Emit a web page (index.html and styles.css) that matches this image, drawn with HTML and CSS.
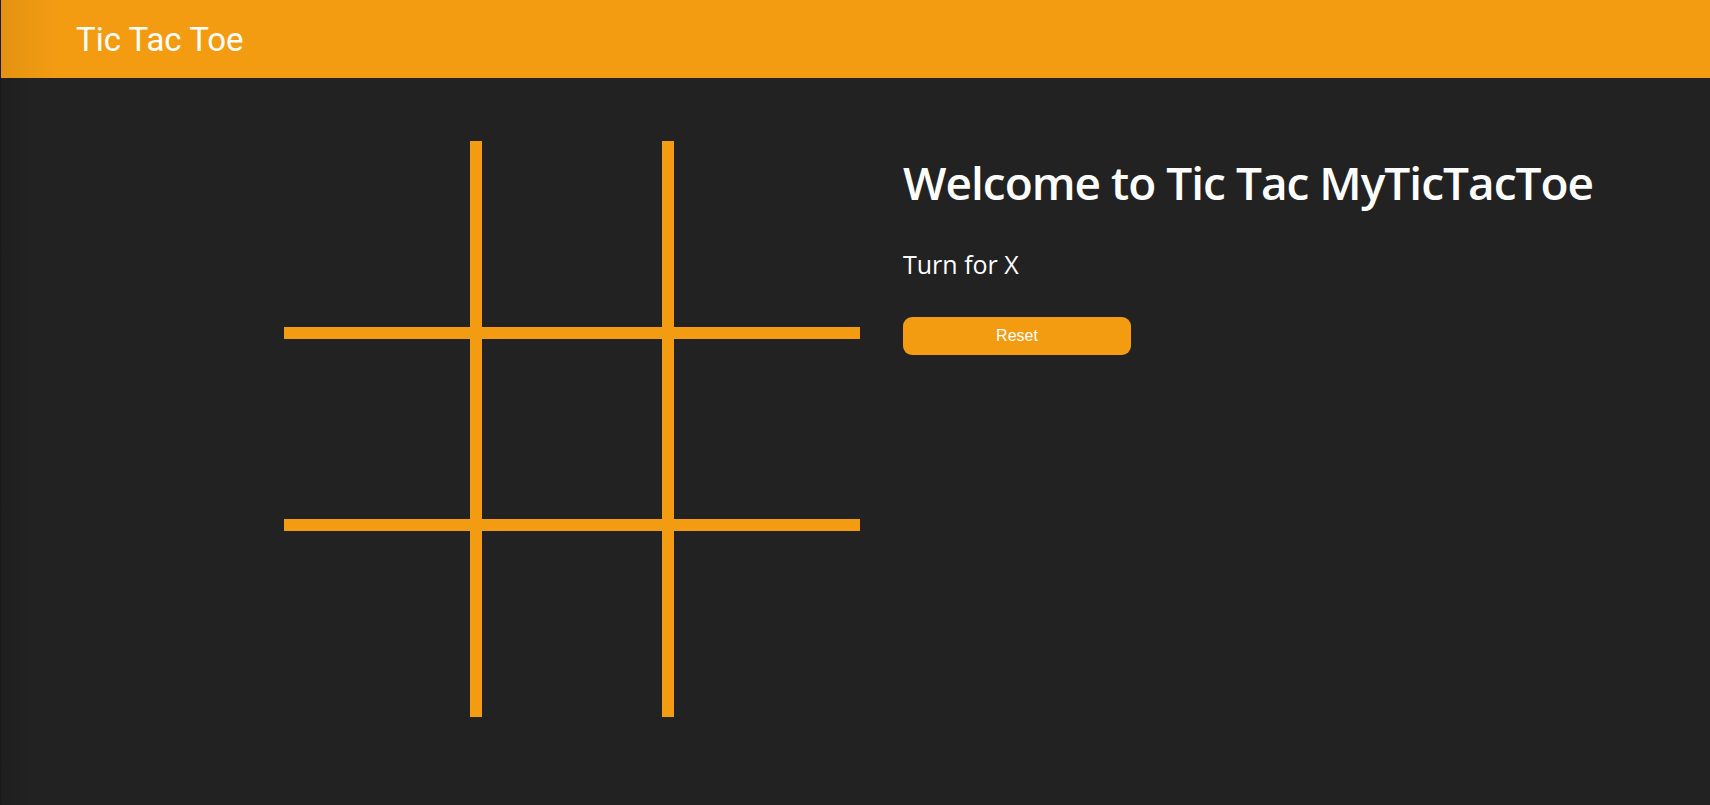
FILE: index.html
```html
<!DOCTYPE html>
<html lang="en">
<head>
<meta charset="utf-8">
<title>Tic Tac Toe</title>
<link rel="stylesheet" href="styles.css">
</head>
<body>
<div class="app">
  <header class="topbar">
    <span class="brand">Tic Tac Toe</span>
  </header>
  <main class="main">
    <div class="board">
      <div class="cell"></div>
      <div class="cell"></div>
      <div class="cell"></div>
      <div class="cell"></div>
      <div class="cell"></div>
      <div class="cell"></div>
      <div class="cell"></div>
      <div class="cell"></div>
      <div class="cell"></div>
    </div>
    <section class="info">
      <h1 class="title">Welcome to Tic Tac MyTicTacToe</h1>
      <p class="turn">Turn for X</p>
      <button class="reset" type="button">Reset</button>
    </section>
  </main>
</div>
</body>
</html>
```

FILE: styles.css
```css
* { box-sizing: border-box; }
html, body { margin: 0; padding: 0; height: 100%; }
body {
  background: #222222;
  font-family: "Open Sans", "Noto Sans", sans-serif;
  color: #ffffff;
  overflow: hidden;
}
.app {
  min-height: 100%;
  border-left: 1px solid #1a1a1a;
  background: linear-gradient(to right, #1f1f1f 0, #222222 30px);
}
.topbar {
  height: 78px;
  display: flex;
  align-items: center;
  padding-left: 75px;
  background: linear-gradient(to right, #e39212 0, #f39c12 55px);
}
.brand {
  font-family: Roboto, "Liberation Sans", sans-serif;
  font-size: 33px;
  color: #ffffff;
  line-height: 1;
}
.main {
  display: flex;
  align-items: flex-start;
  gap: 43px;
  padding: 63px 0 0 283px;
}
.board {
  display: grid;
  grid-template-columns: repeat(3, 192px);
  grid-template-rows: repeat(3, 192px);
  flex: none;
}
.cell { border: 0 solid #f39c12; }
.cell:nth-child(3n+1), .cell:nth-child(3n+2) { border-right-width: 6px; }
.cell:nth-child(3n+2), .cell:nth-child(3n) { border-left-width: 6px; }
.cell:nth-child(-n+6) { border-bottom-width: 6px; }
.cell:nth-child(n+4) { border-top-width: 6px; }
.info {
  display: flex;
  flex-direction: column;
  align-items: flex-start;
}
.title {
  margin: 14px 0 0;
  font-size: 46px;
  font-weight: 600;
  line-height: 1.2;
  letter-spacing: -1px;
  white-space: nowrap;
}
.turn {
  margin: 39px 0 0;
  font-size: 25px;
  line-height: 1.2;
}
.reset {
  margin-top: 38px;
  width: 228px;
  height: 38px;
  border: 0;
  border-radius: 9px;
  background: #f39c12;
  color: #ffffff;
  font-family: "Liberation Sans", Arial, sans-serif;
  font-size: 16px;
  padding: 0;
}
```
